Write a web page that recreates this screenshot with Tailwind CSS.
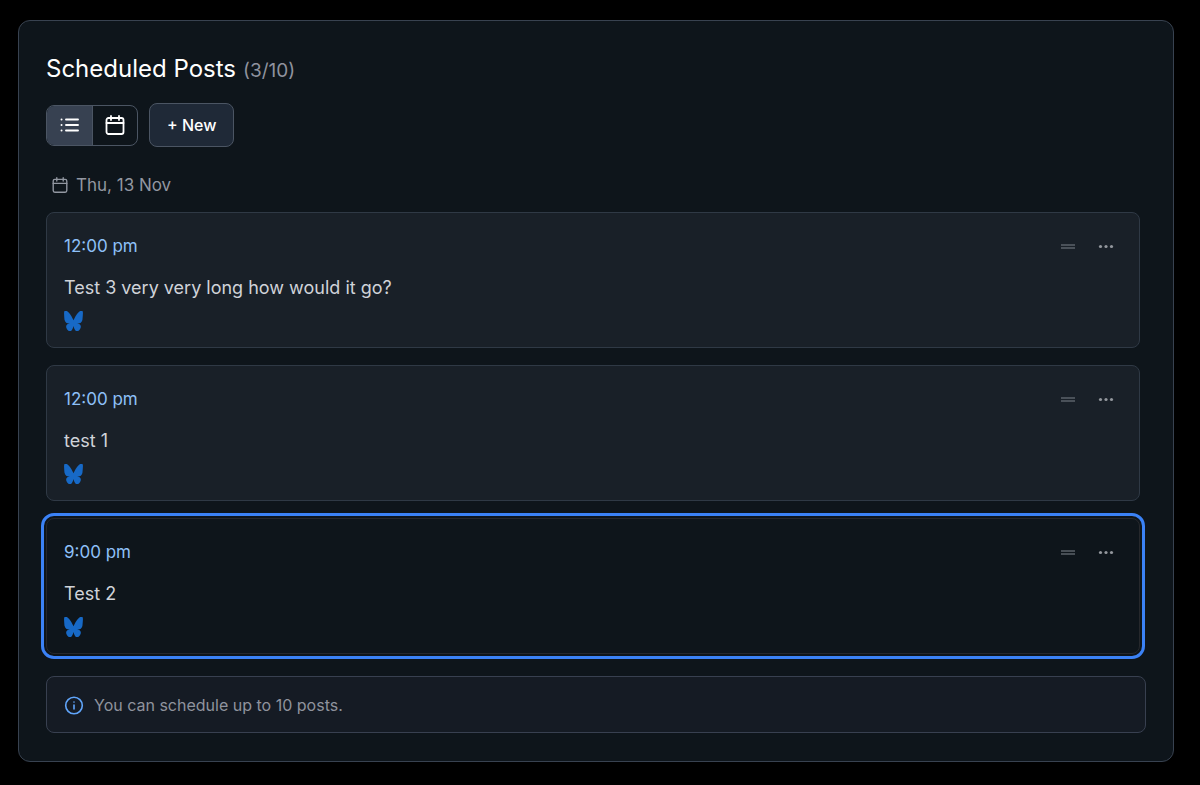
<!DOCTYPE html>
<html lang="en">
<head>
    <meta charset="UTF-8">
    <meta name="viewport" content="width=device-width, initial-scale=1.0">
    <title>Scheduled Posts</title>
    <script src="https://cdn.jsdelivr.net/npm/@tailwindcss/browser@4"></script>
</head>
<body class="bg-black pt-5 pb-6 pl-[18px] pr-[26px] font-['Inter',sans-serif] text-white">
    <!-- shared icons -->
    <svg class="hidden">
        <symbol id="calendar" viewBox="0 0 20 20" fill="none" stroke="currentColor" stroke-linecap="round" stroke-linejoin="round">
            <rect x="1.5" y="3" width="17" height="16" rx="2"/>
            <path d="M1.5 8h17M6 1v4M14 1v4"/>
        </symbol>
        <symbol id="bluesky" viewBox="8 20 584 492" preserveAspectRatio="none">
            <path fill="currentColor" d="m135.72 44.03c66.496 49.921 138.02 151.14 164.28 205.46 26.262-54.316 97.782-155.54 164.28-205.46 47.98-36.021 125.72-63.892 125.72 24.795 0 17.712-10.155 148.79-16.111 170.07-20.703 73.984-96.144 92.854-163.25 81.433 117.3 19.964 147.14 86.092 82.697 152.22-122.39 125.59-175.91-31.511-189.63-71.766-2.514-7.38-3.69-10.832-3.708-7.896-.017-2.936-1.193.516-3.707 7.896-13.714 40.255-67.233 197.36-189.63 71.766-64.444-66.128-34.605-132.26 82.697-152.22-67.108 11.421-142.55-7.449-163.25-81.433-5.956-21.282-16.111-152.36-16.111-170.07 0-88.687 77.742-60.816 125.72-24.795z"/>
        </symbol>
        <symbol id="handle" viewBox="0 0 16 16">
            <path d="M1 6h14M1 9h14" stroke="currentColor" stroke-width="1.5"/>
        </symbol>
        <symbol id="dots" viewBox="0 0 16 16" fill="currentColor">
            <circle cx="2.5" cy="7.5" r="1.6"/><circle cx="8" cy="7.5" r="1.6"/><circle cx="13.5" cy="7.5" r="1.6"/>
        </symbol>
    </svg>

    <main class="rounded-xl border border-[#384250] bg-[#0e151b] px-[27px] pt-[30px] pb-7">
        <h1 class="flex h-9 items-baseline gap-[7px] text-2xl leading-9">Scheduled Posts <span class="text-[19px] text-[#8f929e]">(3/10)</span></h1>

        <div class="mt-4 flex items-center gap-[11px]">
            <div class="flex overflow-hidden rounded-lg border border-[#4b5563]">
                <button class="flex h-[39px] w-[45px] items-center justify-center bg-[#374151]" aria-label="List view">
                    <svg class="size-5" viewBox="0 0 20 20" fill="none" stroke="currentColor" stroke-width="1.9" stroke-linecap="round">
                        <path d="M6 4.5h12M6 10h12M6 15.5h12M1.5 4.5h.1M1.5 10h.1M1.5 15.5h.1"/>
                    </svg>
                </button>
                <button class="flex h-[39px] w-[45px] items-center justify-center border-l border-[#4b5563]" aria-label="Calendar view">
                    <svg class="size-5" stroke-width="1.8"><use href="#calendar"/></svg>
                </button>
            </div>
            <button class="h-11 rounded-lg border border-[#4b5563] bg-[#1f2937] px-[17px] text-base font-medium">+ New</button>
        </div>

        <h2 class="mt-[26px] mb-[15px] flex items-center gap-2 pl-1.5 text-[17px] leading-6 text-[#9297a1]">
            <svg class="size-4" stroke-width="1.7"><use href="#calendar"/></svg>
            Thu, 13 Nov
        </h2>

        <div class="flex flex-col gap-[17px] pr-1.5">
            <article class="rounded-lg border border-[#2f3945] bg-[#192028] py-4 pr-3.5 pl-[17px]">
                <div class="flex h-9 items-center">
                    <time class="mr-auto text-[17px] text-[#8ec0f8]">12:00 pm</time>
                    <button class="flex h-9 w-[38px] items-center justify-center text-[#5b616a]" aria-label="Move post"><svg class="size-4"><use href="#handle"/></svg></button>
                    <button class="flex h-9 w-[38px] items-center justify-center text-[#93979d]" aria-label="Post menu"><svg class="size-4"><use href="#dots"/></svg></button>
                </div>
                <p class="mt-[9px] text-lg leading-7 text-[#d0d3d9]">Test 3 very very long how would it go?</p>
                <svg class="mt-[9px] h-5 w-[19px] text-[#1769c6]"><use href="#bluesky"/></svg>
            </article>

            <article class="rounded-lg border border-[#2f3945] bg-[#192028] py-4 pr-3.5 pl-[17px]">
                <div class="flex h-9 items-center">
                    <time class="mr-auto text-[17px] text-[#8ec0f8]">12:00 pm</time>
                    <button class="flex h-9 w-[38px] items-center justify-center text-[#5b616a]" aria-label="Move post"><svg class="size-4"><use href="#handle"/></svg></button>
                    <button class="flex h-9 w-[38px] items-center justify-center text-[#93979d]" aria-label="Post menu"><svg class="size-4"><use href="#dots"/></svg></button>
                </div>
                <p class="mt-[9px] text-lg leading-7 text-[#d0d3d9]">test 1</p>
                <svg class="mt-[9px] h-5 w-[19px] text-[#1769c6]"><use href="#bluesky"/></svg>
            </article>

            <article class="rounded-lg border border-[#26282c] bg-[#0e151b] py-4 pr-3.5 pl-[17px] outline-3 outline-offset-2 outline-[#3b82f6]">
                <div class="flex h-9 items-center">
                    <time class="mr-auto text-[17px] text-[#8ec0f8]">9:00 pm</time>
                    <button class="flex h-9 w-[38px] items-center justify-center text-[#5b616a]" aria-label="Move post"><svg class="size-4"><use href="#handle"/></svg></button>
                    <button class="flex h-9 w-[38px] items-center justify-center text-[#93979d]" aria-label="Post menu"><svg class="size-4"><use href="#dots"/></svg></button>
                </div>
                <p class="mt-[9px] text-lg leading-7 text-[#d0d3d9]">Test 2</p>
                <svg class="mt-[9px] h-5 w-[19px] text-[#1769c6]"><use href="#bluesky"/></svg>
            </article>
        </div>

        <div class="mt-[22px] flex items-center gap-2.5 rounded-lg border border-[#384050] bg-[#151b24] pt-4 pb-[15px] pl-[17px] text-base leading-6 text-[#8f939d]">
            <svg class="size-5 text-[#60a5fa]" viewBox="0 0 20 20" fill="none" stroke="currentColor" stroke-width="1.6" stroke-linecap="round">
                <circle cx="10" cy="10.5" r="8.3"/>
                <path d="M10 10v4M10 7v.1"/>
            </svg>
            <p>You can schedule up to 10 posts.</p>
        </div>
    </main>
</body>
</html>
